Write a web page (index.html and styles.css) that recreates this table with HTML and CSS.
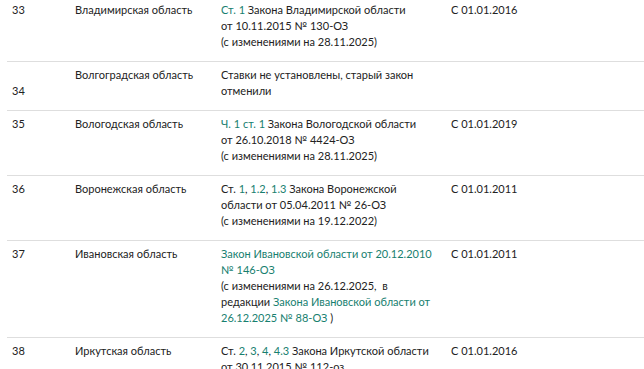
FILE: index.html
```html
<!DOCTYPE html>
<html lang="ru">
<head>
<meta charset="utf-8">
<link rel="stylesheet" href="styles.css">
</head>
<body>
<table class="rates">
  <colgroup>
    <col class="c-num"><col class="c-region"><col class="c-law"><col class="c-date">
  </colgroup>
  <tbody>
    <tr class="first">
      <td>33</td>
      <td>Владимирская область</td>
      <td><a href="#">Ст. 1</a> Закона Владимирской области<br>от 10.11.2015 № 130-ОЗ<br>(с изменениями на 28.11.2025)</td>
      <td>С 01.01.2016</td>
    </tr>
    <tr>
      <td class="num-low">34</td>
      <td>Волгоградская область</td>
      <td>Ставки не установлены, старый закон<br>отменили</td>
      <td></td>
    </tr>
    <tr>
      <td>35</td>
      <td>Вологодская область</td>
      <td><a href="#">Ч. 1 ст. 1</a> Закона Вологодской области<br>от 26.10.2018 № 4424-ОЗ<br>(с изменениями на 28.11.2025)</td>
      <td>С 01.01.2019</td>
    </tr>
    <tr>
      <td>36</td>
      <td>Воронежская область</td>
      <td>Ст. <a href="#">1</a>, <a href="#">1.2</a>, <a href="#">1.3</a> Закона Воронежской<br>области от 05.04.2011 № 26-ОЗ<br>(с изменениями на 19.12.2022)</td>
      <td>С 01.01.2011</td>
    </tr>
    <tr>
      <td>37</td>
      <td>Ивановская область</td>
      <td><a href="#">Закон Ивановской области от 20.12.2010<br>№ 146-ОЗ</a><br>(с изменениями на 26.12.2025,&nbsp; в<br>редакции <a href="#">Закона Ивановской области от<br>26.12.2025 № 88-ОЗ</a> )</td>
      <td>С 01.01.2011</td>
    </tr>
    <tr>
      <td>38</td>
      <td>Иркутская область</td>
      <td>Ст. <a href="#">2</a>, <a href="#">3</a>, <a href="#">4</a>, <a href="#">4.3</a> Закона Иркутской области<br>от 30.11.2015 № 112-оз</td>
      <td>С 01.01.2016</td>
    </tr>
  </tbody>
</table>
</body>
</html>
```
FILE: styles.css
```css
html, body {
  margin: 0;
  padding: 0;
  background: #ffffff;
  overflow: hidden;
}
body {
  padding-left: 7px;
  font-family: "Lato", "Liberation Sans", sans-serif;
  font-size: 11px;
  line-height: 16px;
  color: #222222;
}
.rates {
  width: 637px;
  border-collapse: collapse;
  margin-top: -3px;
  table-layout: fixed;
}
.c-num { width: 63px; }
.c-region { width: 146px; }
.c-law { width: 230px; }
.c-date { width: auto; }
.rates td {
  vertical-align: top;
  padding: 5px 5px 11px 5px;
  border-top: 1px solid #dedede;
  white-space: nowrap;
}
.rates tr.first td { border-top: none; }
.rates td.num-low { padding-top: 21px; padding-bottom: 0; }
.rates a {
  color: #17806f;
  text-decoration: none;
}
```
